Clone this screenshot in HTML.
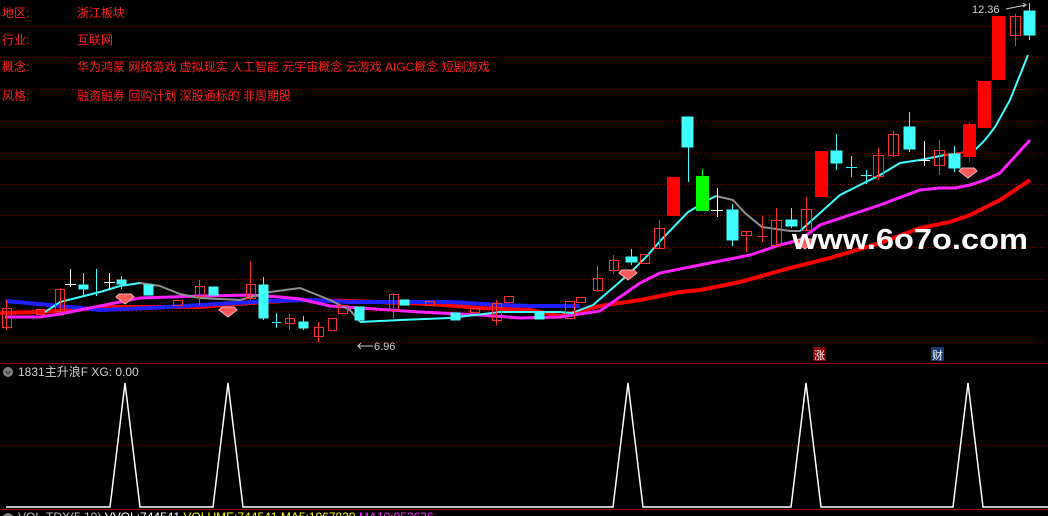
<!DOCTYPE html>
<html><head><meta charset="utf-8"><style>
html,body{margin:0;padding:0;background:#000;width:1048px;height:516px;overflow:hidden}
svg{display:block}
text{font-family:"Liberation Sans","Noto Sans CJK SC",sans-serif}
</style></head><body>
<svg width="1048" height="516" viewBox="0 0 1048 516" xmlns="http://www.w3.org/2000/svg">
<g stroke="#8a0000" stroke-width="1" stroke-dasharray="1,3">
<line x1="0" y1="26.5" x2="1048" y2="26.5"/><line x1="0" y1="57.5" x2="1048" y2="57.5"/>
<line x1="0" y1="89.5" x2="1048" y2="89.5"/><line x1="0" y1="121.5" x2="1048" y2="121.5"/>
<line x1="0" y1="153.5" x2="1048" y2="153.5"/><line x1="0" y1="184.5" x2="1048" y2="184.5"/>
<line x1="0" y1="215.5" x2="1048" y2="215.5"/><line x1="0" y1="247.5" x2="1048" y2="247.5"/>
<line x1="0" y1="279.5" x2="1048" y2="279.5"/><line x1="0" y1="311.5" x2="1048" y2="311.5"/>
<line x1="0" y1="342.5" x2="1048" y2="342.5"/><line x1="0" y1="445.5" x2="1048" y2="445.5"/>
</g>
<line x1="0" y1="363.5" x2="1048" y2="363.5" stroke="#a00000"/>
<line x1="0" y1="509.5" x2="1048" y2="509.5" stroke="#a00000"/>
<g fill="#ff2020" font-size="12">
<text x="2" y="17">地区:</text><text x="77" y="17">浙江板块</text>
<text x="2" y="44">行业:</text><text x="77" y="44">互联网</text>
<text x="2" y="71">概念:</text><text x="77" y="71">华为鸿蒙 网络游戏 虚拟现实 人工智能 元宇宙概念 云游戏 AIGC概念 短剧游戏</text>
<text x="2" y="100">风格:</text><text x="77" y="100">融资融券 回购计划 深股通标的 非周期股</text>
</g>
<polyline fill="none" stroke="#ff0000" stroke-width="4" points="0,313 40,312 110,307 200,307 250,303 300,300 350,301 430,304 480,308 530,310 560,316 600,306 640,300 680,292 700,290 740,282 790,268 830,258 880,243 920,228 950,222 970,215 1000,200 1030,180"/>
<polyline fill="none" stroke="#2020ff" stroke-width="4" points="5,301 50,305 100,310 150,308 200,305 270,301 310,300 350,302 400,302 450,302 500,305 530,306 580,306"/>
<polyline fill="none" stroke="#ff20ff" stroke-width="3" points="5,317 40,317 60,314 100,306 140,298 200,296 250,295 280,297 300,299 330,306 420,312 480,315 520,318 560,317 600,311 620,297 640,283 660,273 700,265 750,255 780,245 800,240 820,225 850,215 880,205 920,190 940,188 955,188 970,185 985,180 1000,173 1030,140"/>
<polyline fill="none" stroke="#40ffff" stroke-width="2" points="45,312 60,302 80,297 100,292 120,286 140,283"/>
<polyline fill="none" stroke="#909090" stroke-width="2" points="140,283 160,286 180,294 200,298 240,300 270,292 300,288 330,300 350,310 360,322"/>
<polyline fill="none" stroke="#40ffff" stroke-width="2" points="360,322 400,320 450,318 500,312 560,312 572,313 593,305 630,273 648,255 661,240 688,212 695,208 708,200 716,196"/>
<polyline fill="none" stroke="#909090" stroke-width="2" points="716,196 733,200 745,213 762,227 790,231 800,231"/>
<polyline fill="none" stroke="#40ffff" stroke-width="2" points="800,231 840,195 880,175 900,163 920,160 945,155"/>
<polyline fill="none" stroke="#ff2020" stroke-width="2" points="945,155 960,153 975,150"/>
<polyline fill="none" stroke="#40ffff" stroke-width="2" points="975,150 985,140 995,127 1010,100 1028,55"/>
<g stroke-width="1">
<g stroke="#ff3030" fill="none">
<line x1="6.5" y1="300" x2="6.5" y2="330"/><rect x="2.5" y="308.5" width="9" height="19"/>
<rect x="36.5" y="309.5" width="8" height="5"/>
<line x1="60.5" y1="288" x2="60.5" y2="312"/><rect x="55.5" y="289.5" width="9" height="22"/>
<rect x="173.5" y="300.5" width="9" height="5"/>
<line x1="199.5" y1="280" x2="199.5" y2="305"/><rect x="195.5" y="286.5" width="9" height="10"/>
<line x1="250.5" y1="261" x2="250.5" y2="300"/><rect x="246.5" y="284.5" width="9" height="14"/>
<line x1="289.5" y1="314" x2="289.5" y2="330"/><rect x="285.5" y="318.5" width="9" height="5"/>
<line x1="318.5" y1="322" x2="318.5" y2="342"/><rect x="314.5" y="327.5" width="9" height="9"/>
<rect x="328.5" y="318.5" width="8" height="12"/>
<rect x="338.5" y="305.5" width="9" height="8"/>
<line x1="393.5" y1="293" x2="393.5" y2="320"/><rect x="389.5" y="294.5" width="9" height="16"/>
<rect x="425.5" y="301.5" width="9" height="4"/>
<rect x="470.5" y="308.5" width="9" height="4"/>
<line x1="496.5" y1="300" x2="496.5" y2="325"/><rect x="492.5" y="303.5" width="9" height="17"/>
<rect x="504.5" y="296.5" width="9" height="6"/>
<rect x="565.5" y="301.5" width="9" height="17"/>
<rect x="576.5" y="297.5" width="9" height="5"/>
<line x1="597.5" y1="266" x2="597.5" y2="292"/><rect x="593.5" y="278.5" width="9" height="12"/>
<line x1="613.5" y1="255" x2="613.5" y2="274"/><rect x="609.5" y="260.5" width="9" height="10"/>
<rect x="640.5" y="254.5" width="9" height="9"/>
<line x1="659.5" y1="220" x2="659.5" y2="248"/><rect x="654.5" y="228.5" width="10" height="20"/>
<line x1="746.5" y1="231" x2="746.5" y2="252"/><rect x="741.5" y="231.5" width="10" height="4"/>
<line x1="762.5" y1="216" x2="762.5" y2="242"/><line x1="757" y1="236.5" x2="768" y2="236.5"/>
<line x1="776.5" y1="208" x2="776.5" y2="246"/><rect x="771.5" y="220.5" width="10" height="25"/>
<line x1="806.5" y1="197" x2="806.5" y2="230"/><rect x="801.5" y="209.5" width="10" height="21"/>
<line x1="878.5" y1="148" x2="878.5" y2="180"/><rect x="873.5" y="155.5" width="10" height="21"/>
<line x1="893.5" y1="131" x2="893.5" y2="157"/><rect x="888.5" y="134.5" width="10" height="21"/>
<line x1="939.5" y1="140" x2="939.5" y2="175"/><rect x="934.5" y="150.5" width="10" height="15"/>
<line x1="1015.5" y1="14" x2="1015.5" y2="46"/><rect x="1010.5" y="16.5" width="10" height="19"/>
</g>
<g fill="#ff0000">
<rect x="667" y="177" width="13" height="39"/>
<rect x="815" y="151" width="13" height="46"/>
<rect x="963" y="124" width="13" height="33"/><line x1="969.5" y1="122" x2="969.5" y2="162" stroke="#ff0000"/>
<rect x="978" y="81" width="13" height="47"/>
<rect x="992" y="16" width="13" height="64"/>
</g>
<g stroke="#40ffff" fill="#40ffff">
<line x1="83.5" y1="273" x2="83.5" y2="295"/><rect x="79" y="285" width="9" height="4"/>
<line x1="96.5" y1="269" x2="96.5" y2="296"/>
<line x1="121.5" y1="276" x2="121.5" y2="289"/><rect x="117" y="280" width="9" height="4"/>
<rect x="144" y="285" width="9" height="10"/>
<rect x="209" y="287" width="9" height="8"/>
<line x1="263.5" y1="277" x2="263.5" y2="320"/><rect x="259" y="285" width="9" height="33"/>
<line x1="276.5" y1="313" x2="276.5" y2="328"/><line x1="272" y1="322.5" x2="281" y2="322.5"/>
<line x1="303.5" y1="316" x2="303.5" y2="330"/><rect x="299" y="322" width="9" height="6"/>
<rect x="355" y="307" width="9" height="13"/>
<rect x="400" y="300" width="9" height="5"/>
<rect x="451" y="313" width="9" height="7"/>
<rect x="535" y="313" width="9" height="6"/>
<line x1="631.5" y1="249" x2="631.5" y2="265"/><rect x="626" y="257" width="11" height="5"/>
<line x1="688.5" y1="147" x2="688.5" y2="182"/><rect x="682" y="117" width="11" height="30"/>
<line x1="732.5" y1="204" x2="732.5" y2="246"/><rect x="727" y="210" width="11" height="30"/>
<line x1="791.5" y1="208" x2="791.5" y2="228"/><rect x="786" y="220" width="11" height="6"/>
<line x1="836.5" y1="134" x2="836.5" y2="170"/><rect x="831" y="151" width="11" height="12"/>
<line x1="851.5" y1="156" x2="851.5" y2="177"/><line x1="846" y1="167.5" x2="857" y2="167.5"/>
<line x1="866.5" y1="170" x2="866.5" y2="184"/><line x1="861" y1="175.5" x2="872" y2="175.5"/>
<line x1="909.5" y1="112" x2="909.5" y2="152"/><rect x="904" y="127" width="11" height="22"/>
<line x1="954.5" y1="146" x2="954.5" y2="172"/><rect x="949" y="154" width="11" height="14"/>
<line x1="1029.5" y1="3" x2="1029.5" y2="40"/><rect x="1024" y="11" width="11" height="24"/>
</g>
<rect x="696" y="176" width="13" height="35" fill="#00ff00"/><line x1="702.5" y1="169" x2="702.5" y2="176" stroke="#00ff00"/>
<g stroke="#fff">
<line x1="70.5" y1="269" x2="70.5" y2="287"/><line x1="65" y1="284.5" x2="76" y2="284.5"/>
<line x1="109.5" y1="273" x2="109.5" y2="290"/><line x1="104" y1="282.5" x2="115" y2="282.5"/>
<line x1="717.5" y1="188" x2="717.5" y2="217"/><line x1="711" y1="210.5" x2="723" y2="210.5"/>
<line x1="924.5" y1="141" x2="924.5" y2="166"/><line x1="919" y1="160.5" x2="930" y2="160.5"/>
</g>
</g>
<g fill="#ff5a5a" stroke="#ffb0b0" stroke-width="1">
<path d="M119,294 h12 l3,3 -9,7 -9,-7z"/>
<path d="M222,307 h12 l3,3 -9,7 -9,-7z"/>
<path d="M622,270 h12 l3,3 -9,7 -9,-7z"/>
<path d="M799,239 h12 l3,3 -9,7 -9,-7z"/>
<path d="M962,168 h12 l3,3 -9,7 -9,-7z"/>
</g>
<text x="792" y="249" fill="#fff" font-size="29" font-weight="bold" textLength="236" lengthAdjust="spacingAndGlyphs">www.6o7o.com</text>
<text x="972" y="13" fill="#d0d0d0" font-size="11">12.36</text>
<path d="M1006,9 l20,-4 m-3,-2 l3,2 -3,2" stroke="#d0d0d0" fill="none"/>
<path d="M358,346 h15 m-12,-3 l-3,3 3,3" stroke="#d0d0d0" fill="none"/>
<text x="374" y="350" fill="#d0d0d0" font-size="11">6.96</text>
<rect x="813" y="347" width="13" height="14" fill="#8a0000"/><text x="814" y="359" fill="#fff" font-size="11">涨</text>
<rect x="931" y="347" width="13" height="14" fill="#1a3a70"/><text x="932" y="359" fill="#fff" font-size="11">财</text>
<circle cx="8" cy="372" r="5" fill="#808080"/><path d="M5.5,371 l2.5,2.5 2.5,-2.5" stroke="#222" fill="none"/>
<text x="18" y="376" fill="#d0d0d0" font-size="12">1831主升浪F XG: 0.00</text>
<polyline fill="none" stroke="#fff" stroke-width="1.5" points="6,507 110,507 125,383 140,507 213,507 228,383 243,507 613,507 628,383 643,507 791,507 806,383 821,507 953,507 968,383 983,507 1048,507"/>
<circle cx="8" cy="518" r="5" fill="#808080"/>
<text x="18" y="521" font-size="12"><tspan fill="#c0c0c0">VOL-TDX(5,10) </tspan><tspan fill="#fff">VVOL:744541 </tspan><tspan fill="#ffff00">VOLUME:744541 MA5:1067839 </tspan><tspan fill="#ff30ff">MA10:953636</tspan></text>
</svg>
</body></html>
